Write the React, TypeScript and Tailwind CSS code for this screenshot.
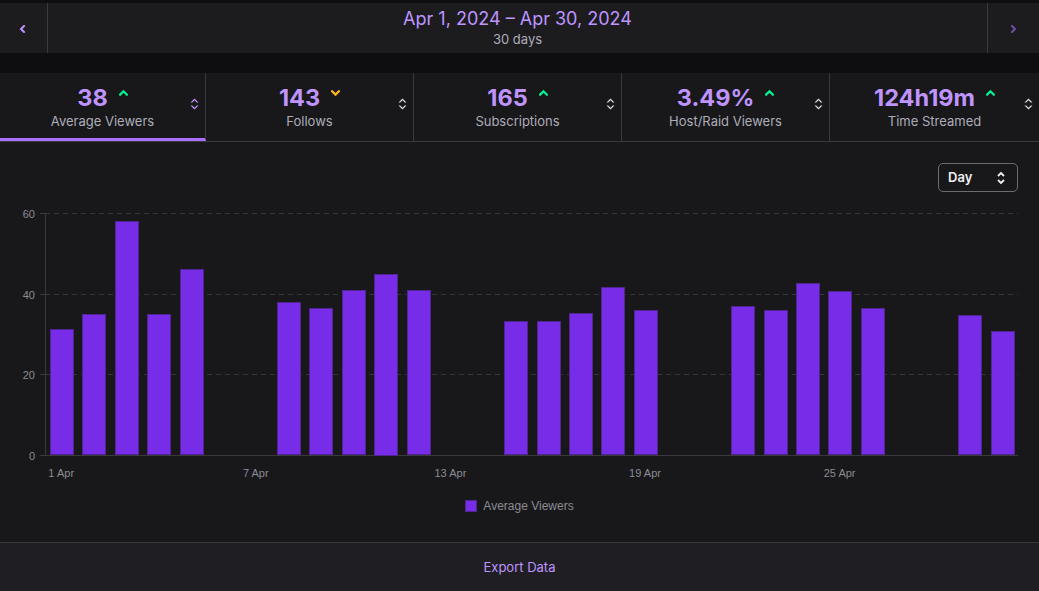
import React from "react";

const values: (number | null)[] = [
  31.2, 35, 58, 35, 46, null, null, 38, 36.4, 41, 45, 41, null, null, 33.2,
  33.2, 35.2, 41.6, 36, null, null, 37, 36, 42.6, 40.7, 36.4, null, null, 34.7, 30.7,
];

function Chevron({ dir, className }: { dir: "up" | "down" | "left" | "right"; className?: string }) {
  const d =
    dir === "up"
      ? "M1 5 L4 2 L7 5"
      : dir === "down"
      ? "M1 2 L4 5 L7 2"
      : dir === "left"
      ? "M5 1 L2 4 L5 7"
      : "M2 1 L5 4 L2 7";
  return (
    <svg viewBox="0 0 8 8" className={className} fill="none" stroke="currentColor" strokeWidth={2} strokeLinecap="square">
      <path d={d} />
    </svg>
  );
}

function SortIcon({ className }: { className?: string }) {
  return (
    <svg viewBox="0 0 9 12" className={className} fill="currentColor">
      <path d="M4.5 0.5 L8.5 4.5 L6.8 4.5 L4.5 2.3 L2.2 4.5 L0.5 4.5 Z" />
      <path d="M4.5 11.5 L8.5 7.5 L6.8 7.5 L4.5 9.7 L2.2 7.5 L0.5 7.5 Z" />
    </svg>
  );
}

const stats = [
  { value: "38", label: "Average Viewers", trend: "up", active: true },
  { value: "143", label: "Follows", trend: "down", active: false },
  { value: "165", label: "Subscriptions", trend: "up", active: false },
  { value: "3.49%", label: "Host/Raid Viewers", trend: "up", active: false },
  { value: "124h19m", label: "Time Streamed", trend: "up", active: false },
];

function Chart() {
  const x0 = 45;
  const x1 = 1018;
  const base = 260;
  const perUnit = (260 - 18) / 60;
  const slot = (x1 - x0) / 30;
  const grid = [0, 20, 40, 60];
  const xLabels = [
    { i: 0, t: "1 Apr" },
    { i: 6, t: "7 Apr" },
    { i: 12, t: "13 Apr" },
    { i: 18, t: "19 Apr" },
    { i: 24, t: "25 Apr" },
  ];
  return (
    <svg width={1039} height={290} className="block" style={{ fontFamily: '"Liberation Sans", Arial, sans-serif' }}>
      {grid.map((g) => {
        const y = Math.round(base - g * perUnit) + 0.5;
        return (
          <g key={g}>
            <line x1={40} x2={x0} y1={y} y2={y} stroke="#3a3a3e" strokeWidth={1} />
            <line
              x1={x0}
              x2={x1}
              y1={y}
              y2={y}
              stroke={g === 0 ? "#3a3a3e" : "#34343a"}
              strokeWidth={1}
              strokeDasharray={g === 0 ? undefined : "5 4"}
            />
            <text x={35} y={y + 4} textAnchor="end" fontSize={11} fill="#8b8b92">
              {g}
            </text>
          </g>
        );
      })}
      <line x1={x0 + 0.5} x2={x0 + 0.5} y1={18} y2={base + 1} stroke="#3a3a3e" strokeWidth={1} />
      {values.map((v, i) => {
        if (v == null) return null;
        const h = v * perUnit;
        const x = x0 + i * slot + 5;
        return (
          <rect
            key={i}
            x={Math.round(x) + 0.5}
            y={Math.round(base - h) + 0.5}
            width={23}
            height={Math.round(h) - 1}
            fill="#772ce8"
            stroke="#4f2690"
            strokeWidth={1}
          />
        );
      })}
      {xLabels.map((l) => (
        <text key={l.t} x={x0 + (l.i + 0.5) * slot} y={282} textAnchor="middle" fontSize={11} fill="#8b8b92">
          {l.t}
        </text>
      ))}
    </svg>
  );
}

export default function App() {
  return (
    <div
      className="w-[1039px] h-[591px] bg-[#0e0e10] flex flex-col overflow-hidden text-[#efeff1]"
      style={{ fontFamily: 'Inter, "Noto Sans", sans-serif' }}
    >
      <div className="h-[3px] bg-[#0e0e10]" />
      {/* header */}
      <div className="h-[50px] flex bg-[#1c1c1f]">
        <div className="w-[48px] border-r border-[#3a3a3e] flex items-center justify-center">
          <Chevron dir="left" className="w-[8px] h-[8px] text-[#bf94ff] ml-[-2px] mt-[2px]" />
        </div>
        <div className="flex-1 flex flex-col items-center justify-center">
          <div className="text-[18px] leading-[22px] text-[#bf94ff] mt-[-2px]">Apr 1, 2024 – Apr 30, 2024</div>
          <div className="text-[13px] leading-[16px] text-[#adadb8] mt-[1px]">30 days</div>
        </div>
        <div className="w-[52px] border-l border-[#3a3a3e] flex items-center justify-center">
          <Chevron dir="right" className="w-[8px] h-[8px] text-[#6f4fa3] mt-[2px]" />
        </div>
      </div>
      <div className="h-[20px] bg-[#0e0e10]" />
      {/* stats */}
      <div className="h-[69px] grid grid-cols-[206px_208px_208px_208px_1fr] bg-[#18181b] border-b border-[#3a3a3e]">
        {stats.map((s, i) => (
          <div
            key={s.label}
            className={
              "relative flex flex-col items-center pt-[11px] " +
              (i < 4 ? "border-r border-[#3a3a3e] " : "") +
              (s.active ? "border-b-[3px] border-b-[#a970ff]" : "")
            }
          >
            <div className="flex items-start">
              <span className="text-[23.5px] leading-[28px] font-bold text-[#bf94ff]">{s.value}</span>
              <Chevron
                dir={s.trend === "up" ? "up" : "down"}
                className={
                  "w-[9px] h-[9px] ml-[11px] mt-[5px] " + (s.trend === "up" ? "text-[#00f593]" : "text-[#ffb31a]")
                }
              />
            </div>
            <div className="text-[13px] leading-[16px] text-[#adadb8] mt-[1px]">{s.label}</div>
            <SortIcon
              className={
                "absolute right-[6px] top-[25px] w-[9px] h-[12px] " + (s.active ? "text-[#bf94ff]" : "text-[#dedee3]")
              }
            />
          </div>
        ))}
      </div>
      {/* chart */}
      <div className="h-[400px] bg-[#18181b] flex flex-col">
        <div className="flex justify-end pt-[21px] pr-[21px]">
          <div className="w-[80px] h-[29px] border border-[#6b6b73] rounded-[5px] flex items-center justify-between pl-[9px] pr-[11px]">
            <span className="text-[13px] font-semibold text-[#efeff1]">Day</span>
            <svg viewBox="0 0 10 14" className="w-[10px] h-[14px]" fill="none" stroke="#efeff1" strokeWidth={1.8}>
              <path d="M2 5 L5 2 L8 5" />
              <path d="M2 9 L5 12 L8 9" />
            </svg>
          </div>
        </div>
        <div className="mt-[3px]">
          <Chart />
        </div>
        <div className="mt-[11px] h-[20px] flex items-center justify-center gap-[6px]">
          <div className="w-[12px] h-[12px] bg-[#772ce8] border border-[#4f2690]" />
          <span className="text-[12px] text-[#8b8b92]" style={{ fontFamily: '"Liberation Sans", Arial, sans-serif' }}>
            Average Viewers
          </span>
        </div>
      </div>
      {/* footer */}
      <div className="flex-1 bg-[#1f1f23] border-t border-[#3a3a3e] flex items-center justify-center">
        <span className="text-[13px] text-[#bf94ff] mt-[2px]">Export Data</span>
      </div>
    </div>
  );
}
